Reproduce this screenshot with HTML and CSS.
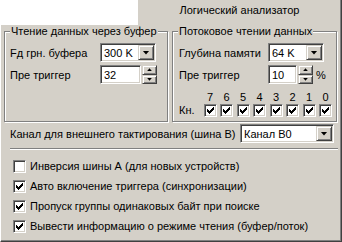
FILE: index.html
```html
<!DOCTYPE html>
<html>
<head>
    <title>Логический анализатор</title>
    <link rel="stylesheet" href="styles.css">
</head>
<body>
    <div class="tabs">
        <div class="tabs-space"></div>
        <div class="tab">Логический анализатор</div>
    </div>
    <div class="page">
        <div class="groups">
            <div class="group group-buffer">
                <div class="group-title">Чтение данных через буфер</div>
                <div class="row first">
                    <span class="label label-buffer">Fд грн. буфера</span>
                    <div class="combo combo-small"><span>300 K</span><i class="drop"></i></div>
                </div>
                <div class="row">
                    <span class="label label-buffer">Пре триггер</span>
                    <div class="edit edit-buffer">32</div>
                    <div class="spin"><b class="up"></b><b class="down"></b></div>
                </div>
            </div>

            <div class="group group-stream">
                <div class="group-title">Потоковое чтении данных</div>
                <div class="row first">
                    <span class="label label-stream">Глубина памяти</span>
                    <div class="combo combo-small"><span>64 K</span><i class="drop"></i></div>
                </div>
                <div class="row">
                    <span class="label label-stream">Пре триггер</span>
                    <div class="edit edit-stream">10</div>
                    <div class="spin"><b class="up"></b><b class="down"></b></div>
                    <span class="percent">%</span>
                </div>
                <div class="bits">
                    <span></span>
                    <span class="bit-num">7</span>
                    <span class="bit-num">6</span>
                    <span class="bit-num">5</span>
                    <span class="bit-num">4</span>
                    <span class="bit-num">3</span>
                    <span class="bit-num">2</span>
                    <span class="bit-num">1</span>
                    <span class="bit-num">0</span>
                    <span class="bits-label">Кн.</span>
                    <span class="cb checked"></span>
                    <span class="cb checked"></span>
                    <span class="cb checked"></span>
                    <span class="cb checked"></span>
                    <span class="cb checked"></span>
                    <span class="cb checked"></span>
                    <span class="cb checked"></span>
                    <span class="cb checked"></span>
                </div>
            </div>
        </div>

        <div class="clock">
            <span class="clock-label">Канал для внешнего тактирования (шина В)</span>
            <div class="combo combo-clock"><span>Канал В0</span><i class="drop"></i></div>
        </div>

        <div class="separator"></div>

        <div class="options">
            <div class="check-row"><span class="cb"></span>Инверсия шины А (для новых устройств)</div>
            <div class="check-row"><span class="cb checked"></span>Авто включение триггера (синхронизации)</div>
            <div class="check-row"><span class="cb checked"></span>Пропуск группы одинаковых байт при поиске</div>
            <div class="check-row"><span class="cb checked"></span>Вывести информацию о режиме чтения (буфер/поток)</div>
        </div>
    </div>

    <script>
        // draw the check marks
        document.querySelectorAll('.cb.checked').forEach(box => {
            box.innerHTML = '<svg width="7" height="7" viewBox="0 0 7 7" shape-rendering="crispEdges">' +
                '<path d="M0 2h1v1h1v1h1v-1h1v-1h1v-1h1v-1h1v3h-1v1h-1v1h-1v1h-1v1h-1v-1h-1v-1h-1z" fill="#000"/></svg>';
        });
    </script>
</body>
</html>
```

FILE: styles.css
```css
body {
    margin: 0;
    width: 342px;
    height: 242px;
    overflow: hidden;
    background-color: #fff;
    font-family: "Liberation Sans", Arial, sans-serif;
    font-size: 11px;
    color: #000;
    white-space: nowrap;
}
.tabs {
    display: flex;
    height: 25px;
}
.tabs-space {
    width: 137px;
}
.tab {
    flex: 1;
    background-color: #d4d0c8;
    border-left: 1px solid #fff;
    border-right: 1px solid #404040;
    box-shadow: inset -1px 0 #808080;
    text-align: center;
    padding-top: 4px;
    line-height: 13px;
}
.page {
    box-sizing: border-box;
    height: 217px;
    background-color: #d4d0c8;
    border-left: 1px solid #fff;
    border-right: 1px solid #404040;
    border-bottom: 1px solid #404040;
    box-shadow: inset -1px -1px #808080;
    padding: 6px 3px 0 3px;
}
.groups {
    display: flex;
    gap: 4px;
}
.group {
    box-sizing: border-box;
    height: 91px;
    border: 1px solid #808080;
    box-shadow: inset 1px 1px #fff, 1px 1px #fff;
}
.group-buffer {
    width: 164px;
    padding-left: 5px;
}
.group-stream {
    width: 165px;
    padding-left: 6px;
}
.group-title {
    display: table;
    margin: -7px 0 0 0;
    padding: 0 1px;
    background-color: #d4d0c8;
    line-height: 13px;
}
.group-stream .group-title {
    margin-left: -1px;
}
.row {
    display: flex;
    align-items: center;
    height: 19px;
    margin-top: 3px;
}
.row.first {
    margin-top: 5px;
}
.label-buffer {
    width: 90px;
}
.label-stream {
    width: 89px;
}

/* sunken edit / combo */
.edit,
.combo,
.cb {
    box-sizing: border-box;
    background-color: #fff;
    border: 1px solid;
    border-color: #808080 #fff #fff #808080;
    box-shadow: inset 1px 1px #404040, inset -1px -1px #d4d0c8;
}
.edit {
    height: 19px;
    padding: 2px 0 0 3px;
    line-height: 14px;
}
.edit-buffer {
    width: 41px;
}
.edit-stream {
    width: 29px;
}
.combo {
    display: flex;
    align-items: center;
    height: 19px;
    padding: 1px;
}
.combo span {
    flex: 1;
    padding-left: 2px;
    line-height: 14px;
}
.combo-small {
    width: 56px;
}
.combo-clock {
    width: 94px;
}
.drop,
.spin b {
    box-sizing: border-box;
    display: flex;
    align-items: center;
    justify-content: center;
    background-color: #d4d0c8;
    border: 1px solid;
    border-color: #d4d0c8 #404040 #404040 #d4d0c8;
    box-shadow: inset 1px 1px #fff, inset -1px -1px #808080;
}
.drop {
    width: 16px;
    height: 15px;
}
.drop::after {
    content: "";
    width: 7px;
    height: 4px;
    background-color: #000;
    clip-path: polygon(0 0, 100% 0, 50% 100%);
}
.spin {
    display: flex;
    flex-direction: column;
    width: 15px;
    height: 19px;
    margin-left: 1px;
}
.spin b {
    flex: 1;
}
.spin b::after {
    content: "";
    width: 5px;
    height: 3px;
    background-color: #000;
}
.spin .up::after {
    clip-path: polygon(50% 0, 100% 100%, 0 100%);
}
.spin .down::after {
    clip-path: polygon(0 0, 100% 0, 50% 100%);
}
.percent {
    margin-left: 3px;
}

/* channel bits */
.bits {
    display: grid;
    grid-template-columns: 21px repeat(8, 13px);
    column-gap: 3.5px;
    row-gap: 1px;
    margin-top: 7px;
    line-height: 12px;
}
.bit-num {
    text-align: center;
}
.bits-label {
    line-height: 13px;
}
.cb {
    display: flex;
    align-items: center;
    justify-content: center;
    width: 13px;
    height: 13px;
}

.clock {
    display: flex;
    align-items: center;
    margin-top: 2px;
    padding: 0 4px 0 6px;
}
.clock-label {
    flex: 1;
}
.separator {
    margin: 5px 0 0 6px;
    border-top: 1px solid #808080;
    border-bottom: 1px solid #fff;
}
.options {
    margin-top: 6px;
}
.check-row {
    display: flex;
    align-items: center;
    height: 20px;
    padding-left: 9px;
}
.check-row .cb {
    margin-right: 4px;
}
```
